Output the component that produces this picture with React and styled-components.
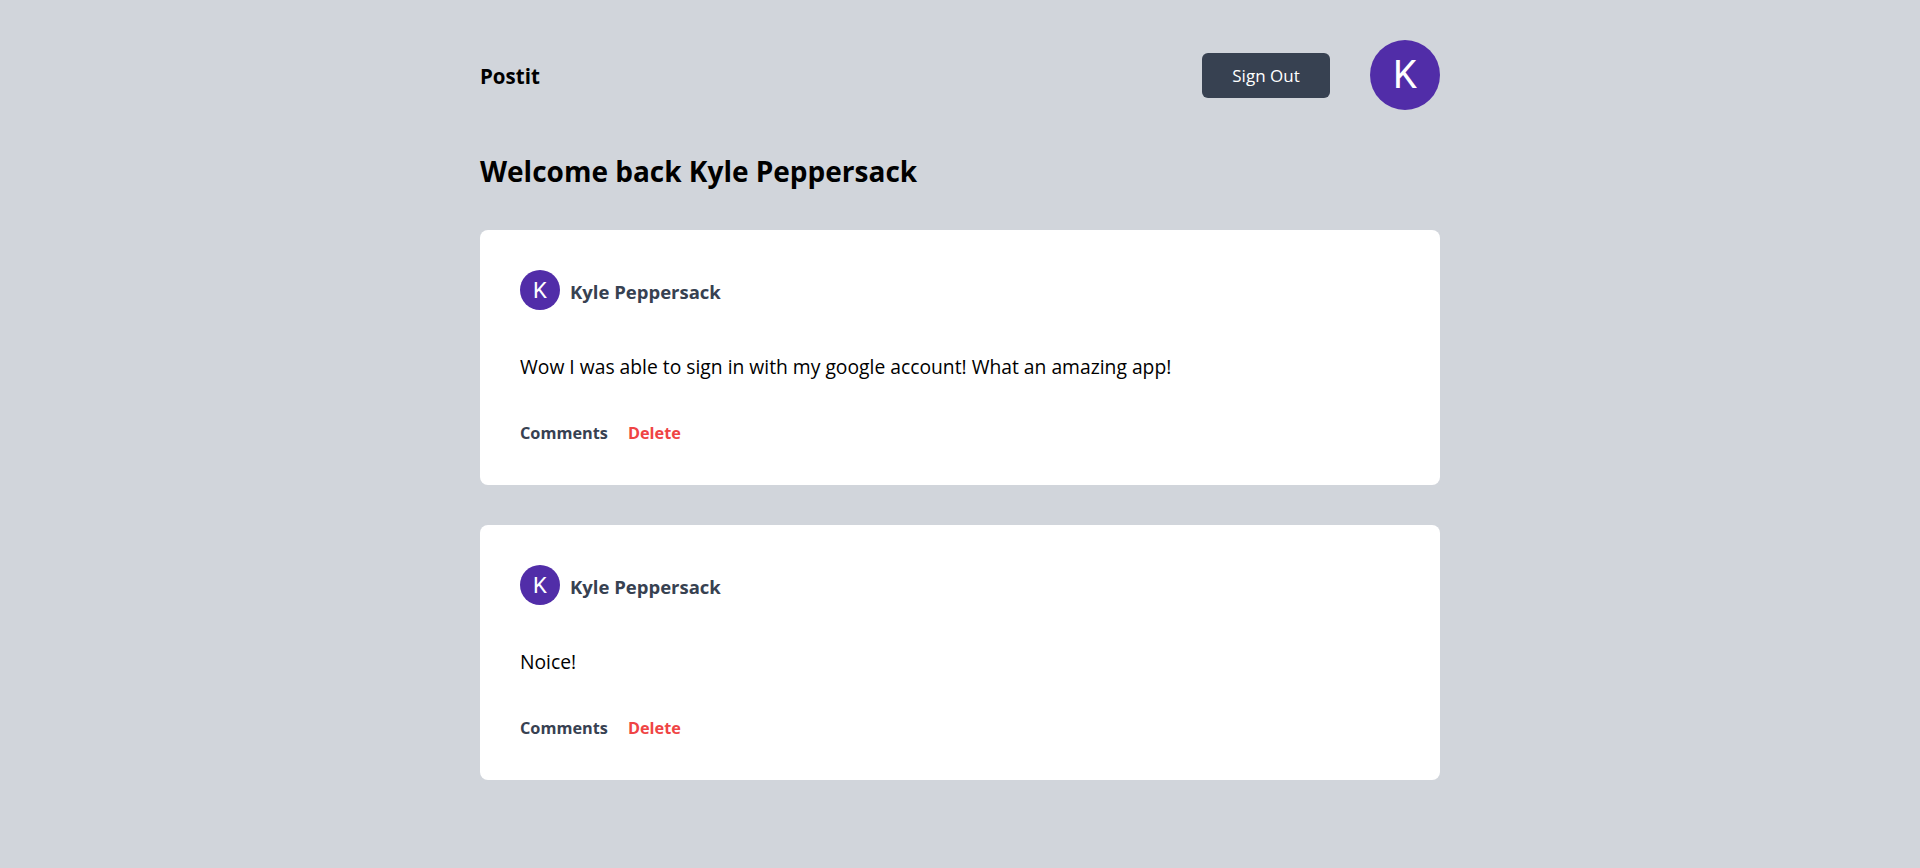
import styled, { createGlobalStyle } from "styled-components";

const GlobalStyle = createGlobalStyle`
    html, body {
        margin: 0;
        padding: 0;
        background: #d1d5db;
        font-family: "Open Sans", "Noto Sans", sans-serif;
    }
`;

const posts = [
    { id: 1, name: "Kyle Peppersack", text: "Wow I was able to sign in with my google account! What an amazing app!" },
    { id: 2, name: "Kyle Peppersack", text: "Noice!" },
];

const App = () => {
    return (
        <>
            <GlobalStyle />
            <Page>
                <Nav>
                    <Logo>Postit</Logo>
                    <NavRight>
                        <SignOut>Sign Out</SignOut>
                        <Avatar size={70} fontSize={38}>K</Avatar>
                    </NavRight>
                </Nav>
                <Welcome>Welcome back Kyle Peppersack</Welcome>
                <PostList>
                    {posts.map((post) => (
                        <Card key={post.id}>
                            <Author>
                                <Avatar size={40} fontSize={22}>K</Avatar>
                                <AuthorName>{post.name}</AuthorName>
                            </Author>
                            <Body>{post.text}</Body>
                            <Actions>
                                <Action>Comments</Action>
                                <Action danger>Delete</Action>
                            </Actions>
                        </Card>
                    ))}
                </PostList>
            </Page>
        </>
    );
}

const Page = styled.main`
    width: 960px;
    margin: 0 auto;
    padding-bottom: 40px;
`;

const Nav = styled.nav`
    display: flex;
    justify-content: space-between;
    align-items: center;
    padding-top: 40px;
`;

const Logo = styled.h1`
    margin: 0;
    font-size: 20.5px;
    font-weight: 700;
    color: #000;
    transform: translateY(1px);
`;

const NavRight = styled.div`
    display: flex;
    align-items: center;
    gap: 40px;
`;

const SignOut = styled.button`
    width: 128px;
    height: 45px;
    border: none;
    border-radius: 6px;
    background: #374151;
    color: #fff;
    font-family: inherit;
    font-size: 17px;
    cursor: pointer;
`;

const Avatar = styled.div`
    width: ${(p) => p.size}px;
    height: ${(p) => p.size}px;
    border-radius: 50%;
    background: #512da8;
    color: #fff;
    display: flex;
    align-items: center;
    justify-content: center;
    font-family: Roboto, sans-serif;
    font-size: ${(p) => p.fontSize}px;
    flex-shrink: 0;
`;

const Welcome = styled.h2`
    margin: 45px 0 0;
    font-size: 28px;
    line-height: 32px;
    font-weight: 700;
    color: #000;
`;

const PostList = styled.div`
    display: flex;
    flex-direction: column;
    gap: 40px;
    margin-top: 43px;
`;

const Card = styled.article`
    background: #fff;
    border-radius: 8px;
    padding: 40px;
`;

const Author = styled.div`
    display: flex;
    align-items: center;
    gap: 10px;
`;

const AuthorName = styled.h3`
    margin: 0;
    font-size: 18.5px;
    font-weight: 700;
    color: #374151;
    transform: translateY(1px);
`;

const Body = styled.p`
    margin: 43px 0 0;
    font-size: 19.3px;
    line-height: 28px;
    color: #000;
`;

const Actions = styled.div`
    display: flex;
    gap: 20px;
    margin-top: 40px;
`;

const Action = styled.span`
    font-size: 16.3px;
    line-height: 24px;
    font-weight: 700;
    color: ${(p) => (p.danger ? "#ef4444" : "#374151")};
    cursor: pointer;
`;

export default App;
